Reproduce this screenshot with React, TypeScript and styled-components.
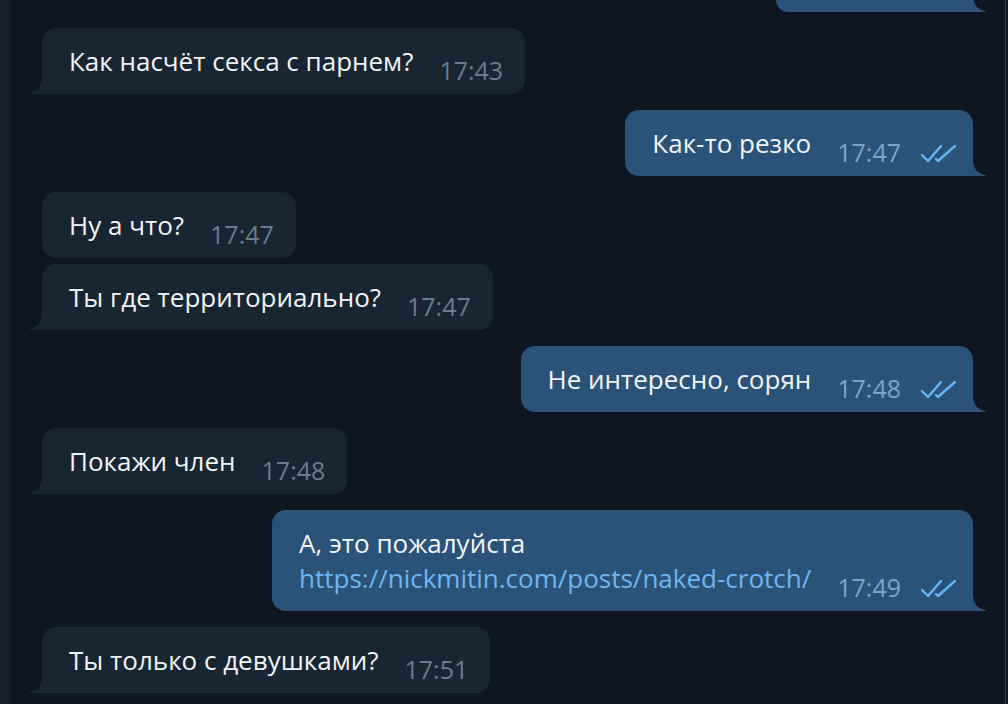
import React from "react";
import styled, { createGlobalStyle } from "styled-components";

const Global = createGlobalStyle`
  html, body { margin: 0; padding: 0; background: #0e1621; }
  body { font-family: "Open Sans", "Noto Sans", sans-serif; }
  * { box-sizing: border-box; }
`;

const Screen = styled.div`
  width: 1008px;
  height: 704px;
  display: flex;
  overflow: hidden;
  background: #0e1621;
`;

const SideStrip = styled.div`
  width: 10px;
  flex: none;
  background: #17212b;
`;

const Chat = styled.div`
  flex: 1;
  overflow: hidden;
  padding: 0 32px;
`;

const EdgeBar = styled.div`
  width: 3px;
  flex: none;
  border-left: 1px solid #3d4248;
  background: #101820;
`;

const List = styled.div`
  display: flex;
  flex-direction: column;
`;

const bubbleBg = (out?: boolean) => (out ? "#2b5278" : "#182533");

const PartialBubble = styled.div<{ $width: number }>`
  position: relative;
  align-self: flex-end;
  width: ${(p) => p.$width}px;
  height: 12px;
  border-radius: 0 0 0 14px;
  background: ${bubbleBg(true)};
`;

const Bubble = styled.div<{ $out?: boolean; $tail?: boolean; $gap: number }>`
  position: relative;
  align-self: ${(p) => (p.$out ? "flex-end" : "flex-start")};
  margin-top: ${(p) => p.$gap}px;
  display: flex;
  align-items: flex-end;
  padding: ${(p) => (p.$out ? "16px 15px 15px 27px" : "16px 22px 15px 27px")};
  border-radius: 14px;
  background: ${(p) => bubbleBg(p.$out)};
  ${(p) =>
    p.$tail
      ? p.$out
        ? "border-bottom-right-radius: 0;"
        : "border-bottom-left-radius: 0;"
      : ""}
`;

const Tail = styled.svg<{ $out?: boolean }>`
  position: absolute;
  bottom: 0;
  width: 13px;
  height: 17px;
  ${(p) => (p.$out ? "right: -13px; transform: scaleX(-1);" : "left: -13px;")}
`;

const Body = styled.div`
  color: #f2f4f6;
  font-size: 26px;
  line-height: 35px;
`;

const Line = styled.div`
  white-space: nowrap;
`;

const Link = styled.span`
  color: #6cb7f5;
`;

const Meta = styled.div<{ $out?: boolean }>`
  display: flex;
  align-items: center;
  gap: 19px;
  margin-left: 26px;
  margin-bottom: -9px;
  font-size: 25px;
  line-height: 35px;
  white-space: nowrap;
  color: ${(p) => (p.$out ? "#7ca6cf" : "#6b7d8c")};
`;

const Checks = styled.svg`
  width: 38px;
  height: 20px;
  flex: none;
`;

type Msg = {
  out?: boolean;
  lines: React.ReactNode[];
  time: string;
  tail?: boolean;
  gap: number;
};

const msgs: Msg[] = [
  { lines: ["Как насчёт секса с парнем?"], time: "17:43", tail: true, gap: 16 },
  { out: true, lines: ["Как-то резко"], time: "17:47", tail: true, gap: 16 },
  { lines: ["Ну а что?"], time: "17:47", gap: 16 },
  { lines: ["Ты где территориально?"], time: "17:47", tail: true, gap: 6 },
  { out: true, lines: ["Не интересно, сорян"], time: "17:48", tail: true, gap: 16 },
  { lines: ["Покажи член"], time: "17:48", tail: true, gap: 16 },
  {
    out: true,
    lines: [
      "А, это пожалуйста",
      <Link key="l">https://nickmitin.com/posts/naked-crotch/</Link>,
    ],
    time: "17:49",
    tail: true,
    gap: 16,
  },
  { lines: ["Ты только с девушками?"], time: "17:51", tail: true, gap: 16 },
];

const TailShape = ({ out }: { out?: boolean }) => (
  <Tail $out={out} viewBox="0 0 13 17">
    <path
      d="M13 0 C13 8 10 13.5 2 15.8 C0.6 16.2 0 16.5 0.2 17 L13 17 Z"
      fill={bubbleBg(out)}
    />
  </Tail>
);

export default function App() {
  return (
    <Screen>
      <Global />
      <SideStrip />
      <Chat>
        <List>
          <PartialBubble $width={197}>
            <TailShape out />
          </PartialBubble>
          {msgs.map((m, i) => (
            <Bubble key={i} $out={m.out} $tail={m.tail} $gap={m.gap}>
              <Body>
                {m.lines.map((l, j) => (
                  <Line key={j}>{l}</Line>
                ))}
              </Body>
              <Meta $out={m.out}>
                <span>{m.time}</span>
                {m.out && (
                  <Checks viewBox="0 0 38 20" fill="none">
                    <path d="M2 12 L8 18 L21 3" stroke="#62b6f7" strokeWidth="2.4" strokeLinecap="round" strokeLinejoin="round" />
                    <path d="M16 16 L18 18 L35 3" stroke="#62b6f7" strokeWidth="2.4" strokeLinecap="round" strokeLinejoin="round" />
                  </Checks>
                )}
              </Meta>
              {m.tail && <TailShape out={m.out} />}
            </Bubble>
          ))}
        </List>
      </Chat>
      <EdgeBar />
    </Screen>
  );
}
